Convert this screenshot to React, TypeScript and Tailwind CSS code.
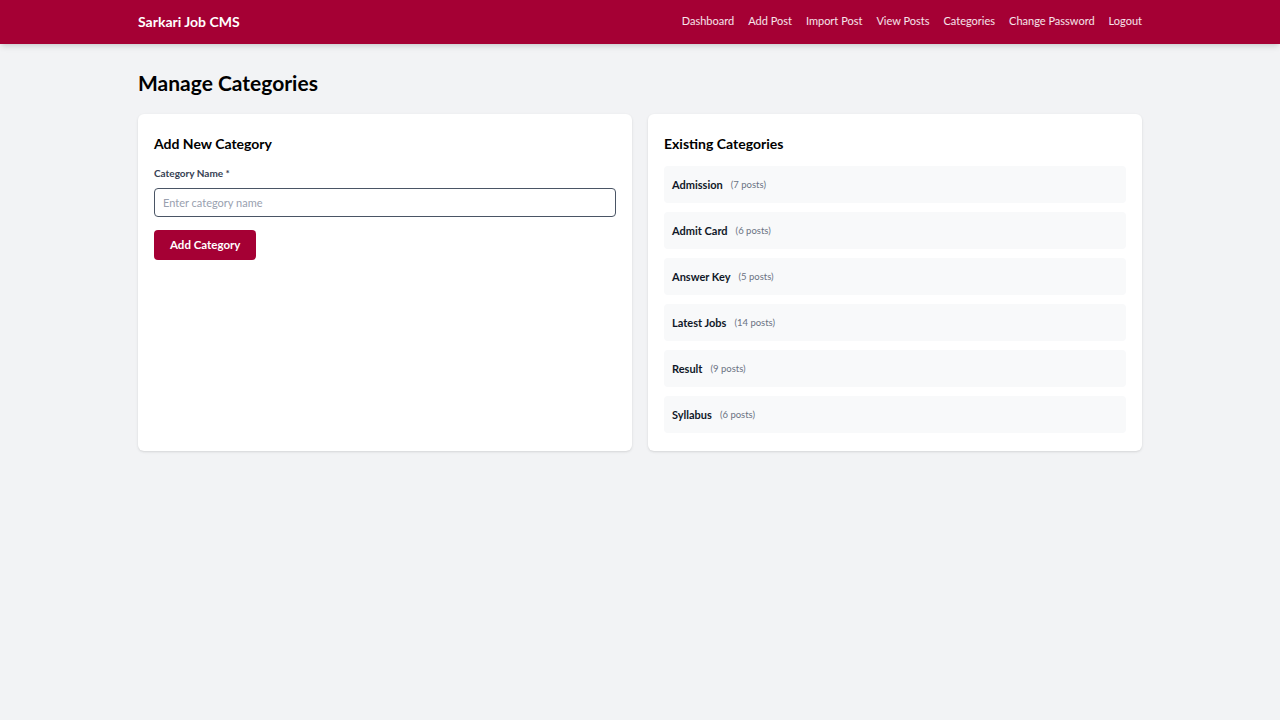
import React, { useState } from "react";

const navLinks = ["Dashboard", "Add Post", "Import Post", "View Posts", "Categories", "Change Password", "Logout"];

const categories = [
    { name: "Admission", count: 7 },
    { name: "Admit Card", count: 6 },
    { name: "Answer Key", count: 5 },
    { name: "Latest Jobs", count: 14 },
    { name: "Result", count: 9 },
    { name: "Syllabus", count: 6 },
];

const font = { fontFamily: "Lato, 'Noto Sans', sans-serif" };

export default function App() {
    const [name, setName] = useState("");

    return (
        <div className="min-h-screen bg-[#f2f3f5] text-black" style={font}>
            <nav className="bg-[#a50034] shadow-md">
                <div className="mx-auto max-w-[1004px] h-[44px] pb-[2px] flex items-center justify-between">
                    <span className="text-white font-bold text-[14px]">Sarkari Job CMS</span>
                    <div className="flex gap-[14px]">
                        {navLinks.map((l) => (
                            <a key={l} href="#" className="text-[11px] text-white/90 hover:text-white">
                                {l}
                            </a>
                        ))}
                    </div>
                </div>
            </nav>

            <main className="mx-auto max-w-[1004px] pt-[25px]">
                <h1 className="text-[21px] font-bold leading-[28px] mb-[17px]">Manage Categories</h1>

                <div className="grid grid-cols-2 gap-4">
                    <section className="bg-white rounded-md shadow-sm p-4 pt-[20px]">
                        <h2 className="text-[14px] font-bold leading-5 mb-[12px]">Add New Category</h2>
                        <label className="block text-[10px] font-bold text-gray-700 mb-[7px]">Category Name *</label>
                        <input
                            value={name}
                            onChange={(e) => setName(e.target.value)}
                            placeholder="Enter category name"
                            className="w-full h-[29px] px-2 text-[11px] border border-gray-600 rounded placeholder:text-gray-400 outline-none"
                        />
                        <button className="mt-[13px] h-[30px] px-4 bg-[#a50034] text-white text-[11.5px] font-bold rounded">
                            Add Category
                        </button>
                    </section>

                    <section className="bg-white rounded-md shadow-sm px-4 pt-[20px] pb-[18px]">
                        <h2 className="text-[14px] font-bold leading-5 mb-[12px]">Existing Categories</h2>
                        <div className="flex flex-col gap-[9px]">
                            {categories.map((c) => (
                                <div key={c.name} className="bg-[#f8f9fa] rounded h-[37px] px-2 pt-[2px] flex items-center gap-2">
                                    <span className="text-[11px] font-bold text-gray-900">{c.name}</span>
                                    <span className="text-[9.5px] text-gray-500">({c.count} posts)</span>
                                </div>
                            ))}
                        </div>
                    </section>
                </div>
            </main>
        </div>
    );
}
